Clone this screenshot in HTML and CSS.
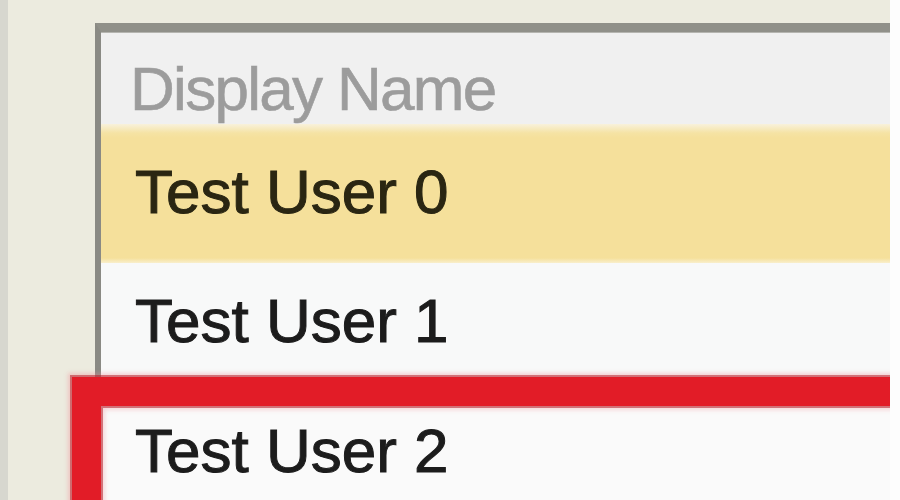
FILE: index.html
```html
<!DOCTYPE HTML>
<html>
	<head>
		<meta charset="utf-8">
		<title>Display Name</title>
		<link rel="stylesheet" href="styles.css">
	</head>
	<body>
		<div id="window">
			<div id="list">
				<div class="head">Display Name</div>
				<div class="row selected">Test User 0</div>
				<div class="row">Test User 1</div>
				<div class="row last">Test User 2</div>
			</div>
			<!-- 红框标注 -->
			<div id="mark"></div>
		</div>
	</body>
</html>
```
FILE: styles.css
```css
*{
	margin:0;
	padding:0;
}
body{
	background:#fdfdfd;
	font-family:"Liberation Sans", Arial, sans-serif;
}
#window{
	width:890px;
	height:500px;
	background:#ecebdf;
	border-left:8px solid #d7d7cf;
	padding:23px 0 0 87px;
	box-sizing:border-box;
	position:relative;
	overflow:hidden;
}
#list{
	height:100%;
	display:flex;
	flex-direction:column;
	background:#f0f0f0;
	border-left:6px solid #8a8a84;
	border-top:9px solid #909089;
	box-shadow:inset 0 1px 0 #b5b5b0;
}
.head{
	height:92px;
	flex:none;
	box-sizing:border-box;
	padding:26px 0 0 29px;
	font-size:62px;
	line-height:62px;
	letter-spacing:-1.7px;
	color:#9c9c9c;
	-webkit-text-stroke:0.6px #9c9c9c;
}
.row{
	height:129px;
	flex:none;
	box-sizing:border-box;
	padding:27px 0 0 34px;
	font-size:62px;
	line-height:62px;
	color:#1c1c1c;
	-webkit-text-stroke:1px #1c1c1c;
	background:#f8f9f9;
}
.row.selected{
	height:139px;
	padding-top:37px;
	color:#2a2612;
	-webkit-text-stroke:1px #2a2612;
	background:linear-gradient(#f8f1dc 0, #f5e3a4 9px, #f5e09b 14px, #f5e09b 134px, #f9efcc 139px);
}
.row.last{
	flex:1;
	padding-top:28px;
	background:#fafafa;
}
#mark{
	position:absolute;
	left:64px;
	top:377px;
	width:880px;
	height:200px;
	border:29px solid #e21c27;
	box-shadow:0 0 0 2px rgba(180,30,40,.55), 0 0 4px 4px rgba(240,130,140,.35), inset 0 0 0 2px rgba(180,30,40,.55), inset 0 0 4px 4px rgba(240,130,140,.3);
}
```
